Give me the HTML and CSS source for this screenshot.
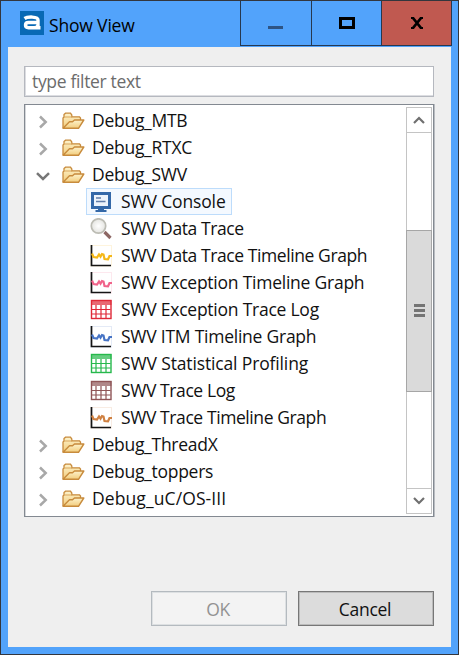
FILE: index.html
```html
<!DOCTYPE html>
<html lang="en">
<head>
<meta charset="utf-8">
<title>Show View</title>
<link rel="stylesheet" href="styles.css">
</head>
<body>
<svg class="defs" aria-hidden="true">
  <defs>
    <linearGradient id="paper" x1="0" y1="0" x2="0" y2="1"><stop offset="0" stop-color="#fdf3cc"/><stop offset="1" stop-color="#f2cc7c"/></linearGradient>
    <radialGradient id="lens"><stop offset="0" stop-color="#fff"/><stop offset="1" stop-color="#e4e4e0"/></radialGradient>
    <symbol id="folder" viewBox="0 0 24 18">
      <path d="M2 16V6L3 5V2.600L4.500 1.200h5L10.800 3v1.800H18.500L19.500 6v2.500" fill="url(#paper)" stroke="#c88b3c" stroke-width="1.300"/>
      <path d="M3 5h8" stroke="#d9a65c"/>
      <path d="M2 16.300 8.500 9.800h3L13.500 8h9.300L17.500 16.300Z" fill="url(#paper)" stroke="#c88b3c" stroke-width="1.400" stroke-linejoin="round"/>
    </symbol>
    <symbol id="right" viewBox="0 0 14 14"><path d="M4 1.500 9.700 7 4 12.500" fill="none" stroke="#a8a8a8" stroke-width="2.500"/></symbol>
    <symbol id="down" viewBox="0 0 14 14"><path d="M1 4.200 7 10l6-5.800" fill="none" stroke="#777" stroke-width="2.500"/></symbol>
    <symbol id="console" viewBox="0 0 22 22">
      <rect x="2.500" y="2.500" width="17" height="14" fill="#edf3fb" stroke="#3468a8" stroke-width="3"/>
      <path d="M6 7h5M6 10.500h9.500" stroke="#617da9" stroke-width="1.400"/>
      <path d="M8 17.500h6v1.500h2.500v2h-11v-2H8Z" fill="#3468a8"/>
    </symbol>
    <symbol id="search" viewBox="0 0 22 22">
      <path d="m14.500 14 6 6" stroke="#8d6764" stroke-width="3.200"/>
      <circle cx="8.500" cy="8" r="7.200" fill="url(#lens)" stroke="#bcbcb4" stroke-width="1.700"/>
    </symbol>
    <symbol id="graph" viewBox="0 0 22 22">
      <rect x="1" y=".5" width="20.500" height="20.500" fill="#fff" stroke="currentColor" stroke-opacity=".15"/>
      <path d="M1.500 0v20.500H21" fill="none" stroke="#151515" stroke-width="1.700"/>
      <path d="M2 8.500 3.500 12l3.500.5L9 9.500l1.500 2.200L12 9l1.500.5L14.500 14l3.500.3L19.500 11H22" fill="none" stroke="currentColor" stroke-width="2.200"/>
    </symbol>
    <symbol id="table" viewBox="0 0 22 22">
      <rect x="1.500" y="1.500" width="19.500" height="18" fill="#fff" stroke="currentColor" stroke-width="1.400"/>
      <path d="M1 1h20.500v5H1Z" fill="currentColor" fill-opacity=".7"/>
      <path d="M2 10.500h18.500M2 15h18.500M6 6v13M11 6v13M16 6v13" stroke="currentColor" stroke-width="1.200"/>
    </symbol>
  </defs>
</svg>
<main class="window">
  <header class="titlebar">
    <svg class="app-icon" viewBox="0 0 24 24"><path fill="#0869b5" d="M0 0h24v24H0z"/><path d="M4.500 7.500C7 5.700 18 5 18 9v7.700h2.500M18 11.500H8.500c-4 0-4 5.200 0 5.200h5.500q4 0 4-3" fill="none" stroke="#fff" stroke-width="3.400"/></svg>
    <h1 class="title">Show View</h1>
    <div class="controls">
      <button class="control" aria-label="Minimize"><svg viewBox="0 0 16 12"><path d="M0 9h15v3H0z" fill="#2e5484"/></svg></button>
      <button class="control" aria-label="Maximize"><svg viewBox="0 0 16 12"><path d="M1.500 1.500h13v9h-13z" fill="none" stroke="#000" stroke-width="3"/></svg></button>
      <button class="control close" aria-label="Close"><svg viewBox="0 0 16 12"><path d="M2 1h3M11 1h3M2 11h3M11 11h3" stroke="#000" stroke-width="2"/><path d="m4 1 8 10M12 1 4 11" stroke="#000" stroke-width="2.800"/></svg></button>
    </div>
  </header>
  <section class="content">
    <div class="filter">type filter text</div>
    <div class="tree">
      <ul class="rows">
        <li class="row"><svg class="arrow"><use href="#right"/></svg><svg class="folder"><use href="#folder"/></svg><span>Debug_MTB</span></li>
        <li class="row"><svg class="arrow"><use href="#right"/></svg><svg class="folder"><use href="#folder"/></svg><span>Debug_RTXC</span></li>
        <li class="row"><svg class="arrow"><use href="#down"/></svg><svg class="folder"><use href="#folder"/></svg><span>Debug_SWV</span></li>
        <li class="row child selected loose"><svg class="icon"><use href="#console"/></svg><span>SWV Console</span></li>
        <li class="row child tight"><svg class="icon"><use href="#search"/></svg><span>SWV Data Trace</span></li>
        <li class="row child tight"><svg class="icon yellow"><use href="#graph"/></svg><span>SWV Data Trace Timeline Graph</span></li>
        <li class="row child wide"><svg class="icon pink"><use href="#graph"/></svg><span>SWV Exception Timeline Graph</span></li>
        <li class="row child wide"><svg class="icon red"><use href="#table"/></svg><span>SWV Exception Trace Log</span></li>
        <li class="row child wide"><svg class="icon blue"><use href="#graph"/></svg><span>SWV ITM Timeline Graph</span></li>
        <li class="row child loose"><svg class="icon green"><use href="#table"/></svg><span>SWV Statistical Profiling</span></li>
        <li class="row child tight"><svg class="icon brown"><use href="#table"/></svg><span>SWV Trace Log</span></li>
        <li class="row child tight"><svg class="icon orange"><use href="#graph"/></svg><span>SWV Trace Timeline Graph</span></li>
        <li class="row"><svg class="arrow"><use href="#right"/></svg><svg class="folder"><use href="#folder"/></svg><span>Debug_ThreadX</span></li>
        <li class="row"><svg class="arrow"><use href="#right"/></svg><svg class="folder"><use href="#folder"/></svg><span>Debug_toppers</span></li>
        <li class="row widest"><svg class="arrow"><use href="#right"/></svg><svg class="folder"><use href="#folder"/></svg><span>Debug_uC/OS-III</span></li>
      </ul>
      <div class="scrollbar">
        <div class="step"><svg viewBox="0 0 12 8"><path d="m1 7 5-5 5 5" fill="none" stroke="#707070" stroke-width="2.200"/></svg></div>
        <div class="track"></div>
        <div class="thumb"><i></i><i></i><i></i></div>
        <div class="track"></div>
        <div class="step"><svg viewBox="0 0 12 8"><path d="m1 1 5 5 5-5" fill="none" stroke="#707070" stroke-width="2.200"/></svg></div>
      </div>
    </div>
    <footer class="actions">
      <button class="button disabled" disabled>OK</button>
      <button class="button">Cancel</button>
    </footer>
  </section>
</main>
</body>
</html>
```
FILE: styles.css
```css
* { box-sizing: border-box; }
body { margin: 0; overflow: hidden; font-family: "Open Sans", "Noto Sans", sans-serif; color: #111; }
.defs { position: absolute; width: 0; height: 0; }
svg { display: block; flex: none; }
.window { width: 459px; height: 655px; display: flex; flex-direction: column; background: #52a3fb; border: 1px solid #33363d; padding: 0 7px 7px; }
.titlebar { height: 46px; flex: none; display: flex; align-items: flex-start; margin-right: -1px; }
.app-icon { width: 24px; height: 24px; margin: 10px 0 0 12px; }
.title { margin: 10px 0 0 5px; font-size: 17.5px; line-height: 28px; font-weight: 400; color: #000; letter-spacing: -.17px; white-space: nowrap; }
.controls { display: flex; height: 45px; margin-left: auto; border: 1px solid #26384f; border-top: 0; }
.control { width: 71px; height: 44px; padding: 0; border: 0; border-right: 1px solid #26384f; background: #52a3fb; display: flex; align-items: center; justify-content: center; }
.control:nth-child(2) { width: 70px; }
.control svg { width: 16px; height: 12px; }
.control.close { width: 69px; border-right: 0; background: #c05950; }
.content { flex: 1; min-height: 0; background: #efefef; padding: 19px 17px 21px 16px; display: flex; flex-direction: column; }
.filter { height: 31px; flex: none; background: #fff; border: 1px solid #b5b8bf; box-shadow: inset 1px 0 #dcdde1, inset 0 -1px #dcdde1; padding-left: 7px; font-size: 17.5px; line-height: 28px; color: #6c6c6c; letter-spacing: -.33px; }
.tree { height: 413px; flex: none; margin-top: 7px; background: #fff; border: 1px solid #838991; box-shadow: inset 1px 0 #d5d7da, 1px 0 #b9bcc1; display: flex; justify-content: space-between; padding: 2px 1px 2px 0; }
.rows { list-style: none; margin: 0; padding: 0; font-size: 17.5px; letter-spacing: -.27px; }
.row { height: 27px; display: flex; align-items: center; padding-left: 11px; white-space: nowrap; }
.row span { line-height: 27px; }
.arrow { width: 14px; height: 14px; margin: 2px 11px 0 0; }
.folder { width: 24px; height: 18px; margin-right: 7px; }
.child { width: max-content; padding: 0 5px 0 65px; }
.icon { width: 22px; height: 22px; margin-right: 9px; }
.selected { margin-left: 61px; padding-left: 3px; background: #f4f9ff; border: 1px solid #bddcfb; }
.tight { letter-spacing: -.41px; }
.wide { letter-spacing: -.24px; }
.loose { letter-spacing: -.14px; }
.widest { letter-spacing: .1px; }
.yellow { color: #f5b819; }
.pink { color: #f0648a; }
.red { color: #df2938; }
.blue { color: #4774c5; }
.green { color: #26b84c; }
.brown { color: #8f5557; }
.orange { color: #cf8142; }
.scrollbar { width: 26px; display: flex; flex-direction: column; border: 1px solid #c4c4c4; }
.step { height: 25px; flex: none; display: flex; align-items: center; justify-content: center; border-bottom: 1px solid #c4c4c4; }
.step:last-child { border-bottom: 0; border-top: 1px solid #c4c4c4; }
.step svg { width: 12px; height: 8px; }
.track { height: 97px; }
.thumb { height: 162px; flex: none; margin: 0 -1px; border: 1px solid #a6a6a6; background: #dadada; display: flex; flex-direction: column; gap: 2px; align-items: center; justify-content: center; }
.thumb i { width: 11px; height: 3px; background: #747474; }
.actions { display: flex; justify-content: flex-end; gap: 11px; margin-top: auto; }
.button { width: 136px; height: 35px; padding: 0 2px 0 0; border: 1px solid #777; box-shadow: inset 0 0 0 1px #bbb; background: #dcdcdc; font: 17.5px/30px "Open Sans", "Noto Sans", sans-serif; color: #111; letter-spacing: -.3px; }
.button.disabled { border-color: #b4babf; box-shadow: inset 0 0 0 1px #dde0e2; background: #f3f3f3; color: #929292; }
```
